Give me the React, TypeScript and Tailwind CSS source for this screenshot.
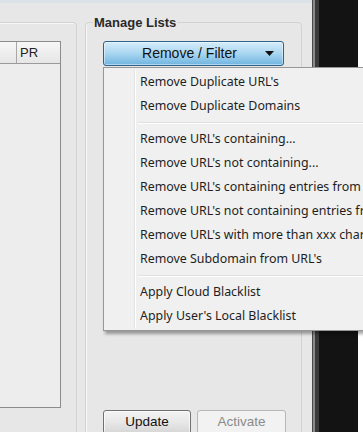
const menuGroups: string[][] = [
  ["Remove Duplicate URL's", 'Remove Duplicate Domains'],
  [
    "Remove URL's containing...",
    "Remove URL's not containing...",
    "Remove URL's containing entries from file",
    "Remove URL's not containing entries from file",
    "Remove URL's with more than xxx characters",
    "Remove Subdomain from URL's",
  ],
  ['Apply Cloud Blacklist', "Apply User's Local Blacklist"],
];

const DropMenu = () => {
  return (
    <div className="absolute left-[103px] top-[67px] w-[300px] border border-[#979797] bg-[#f0f0f0] py-[2px] pl-[2px] shadow-[2px_3px_3px_rgba(0,0,0,0.35)] font-['Noto_Sans',sans-serif] text-[12.4px] text-[#1e1e1e]">
      <div className="absolute left-[30px] top-[2px] bottom-[2px] w-[2px] border-l border-[#e2e3e3] border-r border-r-white" />
      {menuGroups.map((group, gi) => (
        <div key={gi}>
          {gi > 0 && (
            <div className="h-[9px] flex items-center pl-[32px]">
              <div className="w-full h-[2px] border-t border-[#e0e0e0] border-b border-b-white" />
            </div>
          )}
          {group.map((item) => (
            <div key={item} className="h-[24px] flex items-center pl-[34px] whitespace-nowrap leading-none">
              {item}
            </div>
          ))}
        </div>
      ))}
    </div>
  );
};

const App = () => {
  return (
    <div className="relative w-[363px] h-[432px] flex overflow-hidden bg-white font-['Liberation_Sans',Arial,sans-serif]">
      {/* window body */}
      <div className="w-[312px] h-full flex flex-col bg-[#e7e7e7] overflow-hidden">
        <div className="h-[3px] bg-[#dde2e8] shrink-0" />
        <div className="flex flex-1">
          {/* left group: url list */}
          <div className="ml-[-10px] w-[87px] mt-[19px] h-[420px] border border-[#d2d2d2] rounded-[4px] shadow-[inset_1px_1px_0_#f8f8f8] pt-[18px]">
            <div className="w-[70px] h-[367px] border border-[#8c8c8c] bg-[#ededed] flex flex-col">
              <div className="h-[22px] flex border-b border-[#9a9a9a] bg-gradient-to-b from-[#f7f7f7] to-[#e6e6e6] text-[13px] text-[#222]">
                <div className="w-[25px] border-r border-[#a8a8a8]" />
                <div className="flex-1 flex items-center pl-[3px]">PR</div>
              </div>
            </div>
          </div>

          {/* right group: manage lists */}
          <fieldset className="ml-[8px] w-[217px] mt-[12px] h-[430px] border border-[#d2d2d2] rounded-[4px] px-[7px] shadow-[inset_1px_0_0_#f8f8f8]">
            <legend className="px-[1px] text-[13px] font-bold text-[#2a2a2a] leading-[15px]">Manage Lists</legend>
            <button className="mt-[11px] ml-[10px] w-[181px] h-[25px] flex items-center rounded-[3px] border border-[#2c628b] bg-gradient-to-b from-[#d6ecf9] via-[#a9d6f1] to-[#6fb4df] shadow-[inset_0_0_0_1px_rgba(255,255,255,0.45)] text-[14px] text-[#111]">
              <span className="flex-1 text-center pl-[10px]">Remove / Filter</span>
              <svg width="9" height="5" viewBox="0 0 9 5" className="mr-[9px]">
                <path d="M0 0 H9 L4.5 5 Z" fill="#111" />
              </svg>
            </button>
            <div className="mt-[344px] ml-[10px] flex gap-[6px]">
              <button className="w-[88px] h-[24px] rounded-[3px] border border-[#707070] bg-gradient-to-b from-[#f3f3f3] via-[#e8e8e8] to-[#d6d6d6] shadow-[inset_0_0_0_1px_rgba(255,255,255,0.7)] text-[13.5px] text-[#111]">
                Update
              </button>
              <button className="w-[89px] h-[24px] rounded-[3px] border border-[#b4b8ba] bg-[#f2f2f2] text-[13.5px] text-[#8a8a8a]">
                Activate
              </button>
            </div>
          </fieldset>
        </div>
      </div>

      {/* dark area beside the window */}
      <div className="w-[46px] h-full flex">
        <div className="w-[1px] bg-[#4a4a4a]" />
        <div className="w-[2px] bg-[#8a8a8a]" />
        <div className="w-[4px] bg-[#3a3a3a]" />
        <div className="flex-1 bg-[#131313]" />
      </div>
      <div className="w-[5px] h-full bg-white" />

      <DropMenu />
    </div>
  );
};

export default App;
